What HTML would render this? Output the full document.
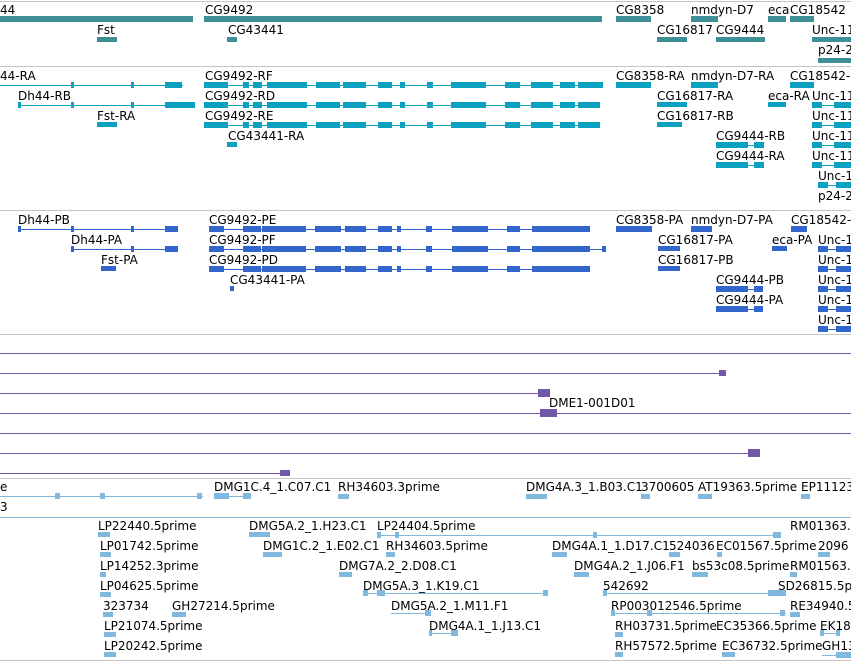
<!DOCTYPE html>
<html><head><meta charset="utf-8"><style>
body{margin:0;width:851px;height:662px;overflow:hidden;background:#fff;position:relative;font-family:"DejaVu Sans","Liberation Sans",sans-serif}
.t{position:absolute;font-size:12px;line-height:14px;white-space:nowrap;color:#000}
.b{position:absolute}
</style></head><body>
<div id="r"></div>
<script>
var H='';
function t(x,y,s){H+='<div class="t" style="left:'+x+'px;top:'+(y-1)+'px">'+s+'</div>';}
function b(x,y,w,h,c){H+='<div class="b" style="left:'+x+'px;top:'+y+'px;width:'+w+'px;height:'+h+'px;background:'+c+'"></div>';}
function hl(x1,x2,y,c){b(x1,y,x2-x1,1,c);}
var G='#c4c4c4';
[1,66,210,334,478,660].forEach(function(y){hl(0,851,y,G);});
hl(0,851,517,'#8ab8d8');
var T='#3f8f96';
t(0,4,'44');b(0,16,193,6,T);
t(205,4,'CG9492');b(204,16,398,6,T);
t(97,24,'Fst');b(97,37,20,5,T);
t(228,24,'CG43441');b(227,37,10,5,T);
t(616,4,'CG8358');b(616,16,35,6,T);
t(691,4,'nmdyn-D7');b(691,16,27,6,T);
t(768,4,'eca');b(768,16,18,6,T);
t(790,4,'CG18542');b(790,16,24,6,T);
t(657,24,'CG16817');b(657,37,30,5,T);
t(716,24,'CG9444');b(716,37,49,5,T);
t(812,24,'Unc-11');b(812,37,39,5,T);
t(818,44,'p24-2');b(818,58,33,5,T);
var C='#0aa0c0';
var ex2=[[204,24],[243,6],[253,9],[267,14],[281,26],[316,24],[343,23],[378,14],[400,5],[427,6],[451,35],[505,15],[531,22],[560,15],[578,22]];
function gene(x1,x2,y,ex,c){hl(x1,x2,y,c);ex.forEach(function(e){b(e[0],y-3,e[1],6,c);});}
t(0,70,'44-RA');gene(0,183,85,[[71,3],[131,3],[165,17]],C);
t(18,90,'Dh44-RB');gene(18,195,105,[[18,3],[71,3],[131,3],[165,30]],C);
t(97,110,'Fst-RA');b(97,122,20,5,C);
t(205,70,'CG9492-RF');gene(204,603,85,ex2.concat([[598,5]]),C);
t(205,90,'CG9492-RD');gene(204,589,105,ex2,C);
t(205,110,'CG9492-RE');gene(204,589,125,ex2,C);
t(228,130,'CG43441-RA');b(227,142,10,5,C);
t(616,70,'CG8358-RA');b(616,82,35,6,C);
t(691,70,'nmdyn-D7-RA');b(691,82,27,6,C);
t(790,70,'CG18542-RA');b(790,82,24,6,C);
t(657,90,'CG16817-RA');b(657,102,30,5,C);
t(768,90,'eca-RA');b(768,102,18,5,C);
t(657,110,'CG16817-RB');b(657,122,25,5,C);
t(716,130,'CG9444-RB');gene(716,764,145,[[716,32],[754,10]],C);
t(716,150,'CG9444-RA');gene(716,764,165,[[716,32],[754,10]],C);
[90,110,130,150].forEach(function(y){t(812,y,'Unc-115');gene(812,851,y+15,[[812,10],[834,17]],C);});
t(818,170,'Unc-115');gene(818,851,185,[[818,10],[836,15]],C);
t(818,190,'p24-2');
var B='#3366cc';
var ex3=[[209,15],[243,18],[262,14],[276,30],[315,26],[345,21],[378,14],[397,4],[426,6],[452,36],[507,13],[532,58]];
t(18,214,'Dh44-PB');gene(18,178,229,[[18,3],[71,3],[131,3],[165,13]],B);
t(71,234,'Dh44-PA');gene(71,178,249,[[71,3],[131,3],[165,13]],B);
t(101,254,'Fst-PA');b(101,266,15,5,B);
t(209,214,'CG9492-PE');gene(209,590,229,ex3,B);
t(209,234,'CG9492-PF');gene(209,606,249,ex3.concat([[602,4]]),B);
t(209,254,'CG9492-PD');gene(209,590,269,ex3,B);
t(230,274,'CG43441-PA');b(230,286,4,5,B);
t(616,214,'CG8358-PA');b(616,226,36,6,B);
t(691,214,'nmdyn-D7-PA');b(691,226,21,6,B);
t(791,214,'CG18542-PA');b(791,226,16,6,B);
t(658,234,'CG16817-PA');b(658,246,22,5,B);
t(772,234,'eca-PA');b(772,246,15,5,B);
t(658,254,'CG16817-PB');b(658,266,22,5,B);
t(716,274,'CG9444-PB');gene(716,763,289,[[716,32],[754,9]],B);
t(716,294,'CG9444-PA');gene(716,763,309,[[716,32],[754,9]],B);
[234,254,274,294,314].forEach(function(y){t(818,y,'Unc-115');gene(818,851,y+15,[[818,10],[836,15]],B);});
var P='#7057a8';
hl(0,851,353,P);
hl(0,725,373,P);b(719,370,7,6,P);
hl(0,550,393,P);b(538,389,12,8,P);
t(549,397,'DME1-001D01');
hl(0,851,413,P);b(540,409,17,8,P);
hl(0,851,433,P);
hl(0,760,453,P);b(748,449,12,8,P);
hl(0,290,473,P);b(280,470,10,6,P);
var L='#80b8de';
t(0,481,'e');gene(0,203,496,[[55,5],[100,5],[197,5]],L);t(0,501,'3');
t(214,481,'DMG1C.4_1.C07.C1');gene(214,251,496,[[214,15],[243,8]],L);
t(338,481,'RH34603.3prime');b(338,494,11,5,L);
t(526,481,'DMG4A.3_1.B03.C1');b(526,494,21,5,L);
t(641,481,'3700605');b(641,494,9,5,L);
t(698,481,'AT19363.5prime');b(698,494,14,5,L);
t(801,481,'EP11123');b(801,494,9,5,L);
t(98,520,'LP22440.5prime');b(98,532,12,5,L);
t(249,520,'DMG5A.2_1.H23.C1');b(249,532,21,5,L);
t(377,520,'LP24404.5prime');gene(377,780,535,[[377,4],[395,4],[593,4],[773,8]],L);
t(790,520,'RM01363.5prime');
t(100,540,'LP01742.5prime');b(100,552,11,5,L);
t(263,540,'DMG1C.2_1.E02.C1');b(263,552,19,5,L);
t(386,540,'RH34603.5prime');b(386,552,9,5,L);
t(552,540,'DMG4A.1_1.D17.C1');b(552,552,15,5,L);
t(669,540,'524036');b(669,552,11,5,L);
t(716,540,'EC01567.5prime');b(717,552,5,5,L);
t(818,540,'2096');b(818,552,12,5,L);
t(100,560,'LP14252.3prime');b(100,572,6,5,L);
t(339,560,'DMG7A.2_2.D08.C1');b(339,572,13,5,L);
t(574,560,'DMG4A.2_1.J06.F1');b(574,572,15,5,L);
t(692,560,'bs53c08.5prime');b(692,572,16,5,L);
t(790,560,'RM01563.5prime');b(790,572,7,5,L);
t(100,580,'LP04625.5prime');b(100,592,11,5,L);
t(363,580,'DMG5A.3_1.K19.C1');gene(363,548,593,[[363,5],[377,8],[543,5]],L);
t(603,580,'542692');gene(603,786,593,[[603,4],[768,18]],L);
t(778,580,'SD26815.5prime');
t(103,600,'323734');b(103,612,10,5,L);
t(172,600,'GH27214.5prime');b(172,612,14,5,L);
t(391,600,'DMG5A.2_1.M11.F1');gene(391,431,613,[[425,6]],L);
t(611,600,'RP003012546.5prime');gene(611,786,613,[[611,4],[647,5],[780,5]],L);
t(790,600,'RE34940.5prime');b(790,612,10,5,L);
t(104,620,'LP21074.5prime');b(104,632,12,5,L);
t(429,620,'DMG4A.1_1.J13.C1');gene(429,458,633,[[429,3],[451,7]],L);
t(615,620,'RH03731.5prime');b(615,632,8,5,L);
t(716,620,'EC35366.5prime');
t(820,620,'EK18');gene(820,840,633,[[820,4],[836,4]],L);
t(104,640,'LP20242.5prime');b(104,652,12,5,L);
t(615,640,'RH57572.5prime');b(615,652,8,5,L);
t(722,640,'EC36732.5prime');b(722,652,13,5,L);
t(822,640,'GH13');gene(822,851,655,[[836,15]],L);
document.getElementById('r').innerHTML=H;
</script>
</body></html>
